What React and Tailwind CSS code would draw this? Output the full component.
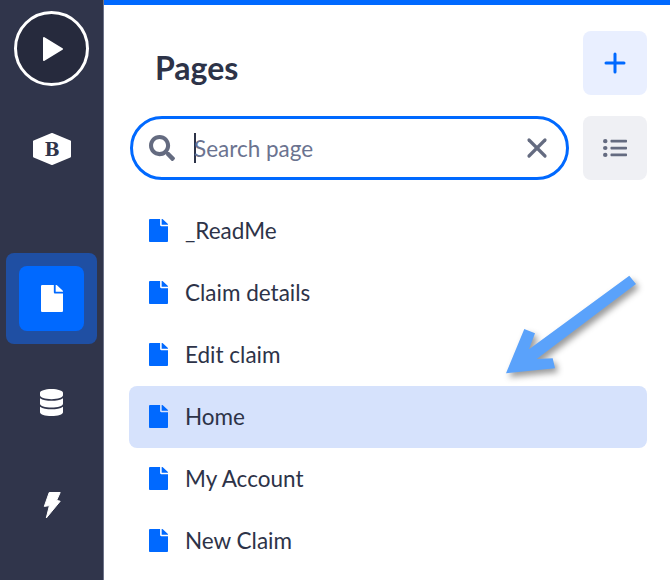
import React from "react";
import { FaDatabase, FaFile, FaListUl, FaSearch } from "react-icons/fa";

const pages = ["_ReadMe", "Claim details", "Edit claim", "Home", "My Account", "New Claim"];

const Sidebar = () => (
  <div className="flex flex-col items-center w-[104px] shrink-0 bg-[#30354b] border-r border-[#6d7389] text-white">
    <div className="flex items-center justify-center mt-[11px] w-[75px] h-[75px] rounded-full border-[3px] border-white bg-[#262a3d]">
      <svg width="24" height="28" viewBox="0 0 24 28" className="ml-[3px]">
        <polygon points="3,3 21,14 3,25" fill="white" stroke="white" strokeWidth="2" strokeLinejoin="round" />
      </svg>
    </div>
    <svg width="40" height="34" viewBox="0 0 40 34" className="mt-[46px]">
      <polygon points="20,2 38,9.5 38,24.5 20,32 2,24.5 2,9.5" fill="white" stroke="white" strokeWidth="2" strokeLinejoin="round" />
      <text x="20" y="23.5" textAnchor="middle" fontSize="18" fontWeight="bold" fontFamily="'DejaVu Serif', serif" fill="#30354b">
        B
      </text>
    </svg>
    <div className="flex items-center justify-center mt-[87px] w-[91px] h-[91px] rounded-lg bg-[#1f4fa3]">
      <div className="flex items-center justify-center w-[65px] h-[65px] rounded-lg bg-[#0069ff]">
        <FaFile preserveAspectRatio="none" className="w-[22px] h-[27px]" />
      </div>
    </div>
    <FaDatabase preserveAspectRatio="none" className="mt-[45px] w-[23px] h-[27px]" />
    <svg width="18" height="28" viewBox="-1 -1 18 28" className="mt-[75px]">
      <polygon
        points="5.2,0.5 16.2,0.5 12.6,8.4 16.2,9.2 2.3,26 5.4,13.6 0.3,14.4"
        fill="white"
        stroke="white"
        strokeWidth="1"
        strokeLinejoin="round"
      />
    </svg>
  </div>
);

const App = () => {
  return (
    <div className="relative flex w-[670px] h-[580px] overflow-hidden bg-white font-['Lato',sans-serif] text-[#2d3348]">
      <Sidebar />
      <div className="flex-1 min-w-0">
        <div className="h-[5px] bg-[#0069ff]" />
        <div className="pl-[26px] pr-[23px]">
          <div className="flex items-center justify-between pt-[26px] pl-[25px]">
            <h1 className="text-[32px] font-bold pt-[10px]">Pages</h1>
            <button className="flex items-center justify-center w-[64px] h-[64px] rounded-lg bg-[#e9efff]">
              <svg width="22" height="22" viewBox="0 0 22 22" stroke="#0069ff" strokeWidth="3" strokeLinecap="round">
                <line x1="11" y1="2" x2="11" y2="20" />
                <line x1="2" y1="11" x2="20" y2="11" />
              </svg>
            </button>
          </div>
          <div className="flex items-center gap-[14px] mt-[21px]">
            <div className="flex flex-1 items-center h-[64px] rounded-full border-[3px] border-[#0069ff] pl-[16px] pr-[18px]">
              <FaSearch size={26} className="text-[#646b80] shrink-0" />
              <span className="w-[2px] h-[30px] bg-[#2d3348] ml-[19px] -mr-[2px] shrink-0" />
              <span className="flex-1 pt-[2px] text-[22.5px] text-[#6b7390]">Search page</span>
              <svg width="22" height="22" viewBox="0 0 22 22" stroke="#646b80" strokeWidth="3.2" strokeLinecap="round">
                <line x1="3" y1="3" x2="19" y2="19" />
                <line x1="19" y1="3" x2="3" y2="19" />
              </svg>
            </div>
            <button className="flex items-center justify-center w-[64px] h-[64px] rounded-lg bg-[#eff0f4]">
              <FaListUl preserveAspectRatio="none" className="w-[24px] h-[22px] text-[#646b80]" />
            </button>
          </div>
          <ul className="mt-[20px] -ml-px">
            {pages.map((page) => (
              <li
                key={page}
                className={`flex items-center gap-[17px] h-[62px] pl-[20px] rounded-lg text-[22.5px] ${
                  page === "Home" ? "bg-[#d6e2fc]" : ""
                }`}
              >
                <FaFile preserveAspectRatio="none" className="w-[19px] h-[23px] -mt-[2px] text-[#0069ff] shrink-0" />
                {page}
              </li>
            ))}
          </ul>
        </div>
      </div>
      <svg
        width="670"
        height="580"
        viewBox="0 0 670 580"
        className="absolute inset-0 pointer-events-none drop-shadow-[3px_4px_3px_rgba(0,0,0,0.4)]"
      >
        <polygon
          points="629.3,275.7 529,349.3 535,333.3 524.3,329 506,373.3 555,368.3 552.7,358.3 536.7,359 636,284"
          fill="#5aa2fb"
        />
      </svg>
    </div>
  );
};

export default App;
